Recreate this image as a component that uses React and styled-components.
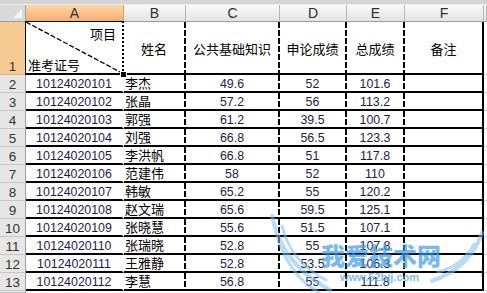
import React from 'react'
import styled, { createGlobalStyle } from 'styled-components'

const GlobalStyle = createGlobalStyle`
  html, body { margin: 0; padding: 0; background: #fff; }
  body { font-family: "Liberation Sans", Arial, sans-serif; }
`

const rows = [
  ['10124020101', '李杰', '49.6', '52', '101.6'],
  ['10124020102', '张晶', '57.2', '56', '113.2'],
  ['10124020103', '郭强', '61.2', '39.5', '100.7'],
  ['10124020104', '刘强', '66.8', '56.5', '123.3'],
  ['10124020105', '李洪帆', '66.8', '51', '117.8'],
  ['10124020106', '范建伟', '58', '52', '110'],
  ['10124020107', '韩敏', '65.2', '55', '120.2'],
  ['10124020108', '赵文瑞', '65.6', '59.5', '125.1'],
  ['10124020109', '张晓慧', '55.6', '51.5', '107.1'],
  ['10124020110', '张瑞晓', '52.8', '55', '107.8'],
  ['10124020111', '王雅静', '52.8', '53.5', '106.3'],
  ['10124020112', '李慧', '56.8', '55', '111.8'],
]

const heads = ['姓名', '公共基础知识', '申论成绩', '总成绩', '备注']

function App() {
  return (
    <Frame>
      <GlobalStyle />
      <TopStrip />
      <Sheet>
        <Corner />
        {['A', 'B', 'C', 'D', 'E', 'F'].map((c) => (
          <ColHead key={c} $active={c === 'A'}>{c}</ColHead>
        ))}
        <ColHead $tail />

        <RowHead $active>1</RowHead>
        <TitleCell>
          <Slash viewBox="0 0 100 100" preserveAspectRatio="none">
            <line x1="0" y1="0" x2="100" y2="100" stroke="#000" strokeWidth="1.3"
              strokeDasharray="5 2" vectorEffect="non-scaling-stroke" />
          </Slash>
          <TitleTop>项目</TitleTop>
          <TitleBottom>准考证号</TitleBottom>
          <FillHandle />
        </TitleCell>
        {heads.map((h, i) => (
          <HeadCell key={h} $edge={i === heads.length - 1 ? 'solid' : 'dashed'}>{h}</HeadCell>
        ))}
        <Blank />

        {rows.map((r, i) => (
          <React.Fragment key={r[0]}>
            <RowHead>{i + 2}</RowHead>
            <Cell $edge="none">{r[0]}</Cell>
            <Cell $cjk $left>{r[1]}</Cell>
            <Cell>{r[2]}</Cell>
            <Cell>{r[3]}</Cell>
            <Cell>{r[4]}</Cell>
            <Cell $edge="solid" />
            <Blank />
          </React.Fragment>
        ))}

        <RowHead />
      </Sheet>

      <Mark>
        <Wings viewBox="0 0 487 293">
          <g fill="none" stroke="#7cc0f0" strokeLinecap="round">
            <path d="M272 216 C278 246 296 272 330 290" strokeWidth="4" />
            <path d="M282 226 C288 250 302 268 326 280" strokeWidth="3" />
            <path d="M276 232 C284 262 300 282 318 292" strokeWidth="3" />
            <path d="M482 233 C474 256 458 272 432 281" strokeWidth="4" />
            <path d="M474 244 C466 260 454 268 438 272" strokeWidth="3" />
          </g>
        </Wings>
        <MarkTitle>我爱技术网</MarkTitle>
        <MarkUrl>www.52bjj.com</MarkUrl>
      </Mark>
    </Frame>
  )
}

export default App

const dashes = (edge) => {
  if (edge === 'solid') return 'linear-gradient(#000, #000)'
  if (edge === 'none') return 'none'
  return 'repeating-linear-gradient(to bottom, #000 0 6px, transparent 6px 8px)'
}

const Frame = styled.div`
position: relative;
width: 487px;
height: 293px;
overflow: hidden;
background: #fff;
`

const TopStrip = styled.div`
height: 4px;
background: #d4d4d4;
border-bottom: 1px solid #eeeeee;
`

const Sheet = styled.div`
display: grid;
grid-template-columns: 26px 98px 62px 94px 67px 58px 79px 1fr;
grid-template-rows: 17px 53px repeat(12, 18px) 1fr;
height: 288px;
`

const Corner = styled.div`
position: relative;
background: #d9d9d9;
border-right: 1px solid #9e9e9e;
border-bottom: 1px solid #9e9e9e;
&::after {
  content: '';
  position: absolute;
  right: 3px;
  bottom: 3px;
  border-left: 9px solid transparent;
  border-bottom: 9px solid #f4f4f4;
}
`

const ColHead = styled.div`
display: flex;
align-items: center;
justify-content: center;
background: ${p => p.$active
  ? 'linear-gradient(#fcd7ab, #f9ad6c)'
  : 'linear-gradient(#f9f9f9, #e3e3e3)'};
border-right: 1px solid ${p => p.$active ? '#e0a060' : '#b7b7b7'};
border-bottom: 1px solid ${p => p.$active ? '#f08a2e' : '#9e9e9e'};
font-size: 14px;
color: #2e2e2e;
`

const RowHead = styled.div`
display: flex;
align-items: flex-end;
justify-content: center;
background: ${p => p.$active ? '#f7c993' : '#e6e6e6'};
border-right: 1px solid ${p => p.$active ? '#f08a2e' : '#9e9e9e'};
border-bottom: 1px solid ${p => p.$active ? '#e6b078' : '#c6c6c6'};
font-size: 13.5px;
line-height: 15px;
color: #333;
`

const TitleCell = styled.div`
position: relative;
display: flex;
flex-direction: column;
justify-content: space-between;
padding: 4px 0 0 2px;
border-left: 1px solid #000;
border-top: 1px solid #000;
border-right: 2px dotted #000;
border-bottom: 2px solid #000;
margin-left: -1px;
margin-top: -1px;
font: 13px/16px "Noto Sans CJK SC", sans-serif;
color: #000;
`

const Slash = styled.svg`
position: absolute;
inset: 0;
width: 100%;
height: 100%;
`

const TitleTop = styled.span`
align-self: flex-end;
margin-right: 6px;
`

const TitleBottom = styled.span`
align-self: flex-start;
`

const FillHandle = styled.div`
position: absolute;
right: -5px;
bottom: -5px;
width: 5px;
height: 5px;
background: #000;
border: 1px solid #fff;
z-index: 2;
`

const HeadCell = styled.div`
display: flex;
align-items: center;
justify-content: center;
padding-top: 3px;
border-right: 2px solid transparent;
border-bottom: 2px solid #000;
background: ${p => dashes(p.$edge)} right top / 2px 100% no-repeat;
background-origin: border-box;
font: 13px/16px "Noto Sans CJK SC", sans-serif;
color: #000;
white-space: nowrap;
`

const Cell = styled.div`
display: flex;
align-items: ${p => p.$cjk ? 'center' : 'flex-end'};
justify-content: ${p => p.$left ? 'flex-start' : 'center'};
padding-left: ${p => p.$left ? '1px' : '0'};
border-right: 2px solid transparent;
border-bottom: 2px solid #000;
background: ${p => dashes(p.$edge)} right top / 2px 100% no-repeat;
background-origin: border-box;
font: ${p => p.$cjk
  ? '13px/14px "Noto Sans CJK SC", sans-serif'
  : '12.4px/13px "Liberation Sans", Arial, sans-serif'};
color: ${p => p.$cjk ? '#000' : '#1d1a4c'};
white-space: nowrap;
`

const Blank = styled.div`
border-bottom: 1px solid #d0d7e5;
`

const Mark = styled.div`
position: absolute;
inset: 0;
pointer-events: none;
`

const Wings = styled.svg`
position: absolute;
inset: 0;
width: 487px;
height: 293px;
opacity: 0.55;
`

const MarkTitle = styled.div`
position: absolute;
left: 321px;
top: 241px;
font: 900 24px/28px "Noto Sans CJK SC", sans-serif;
color: #3f9be6;
opacity: 0.7;
`

const MarkUrl = styled.div`
position: absolute;
left: 340px;
top: 271px;
font: bold 11px/12px "Liberation Sans", Arial, sans-serif;
color: #54aaea;
opacity: 0.75;
`
